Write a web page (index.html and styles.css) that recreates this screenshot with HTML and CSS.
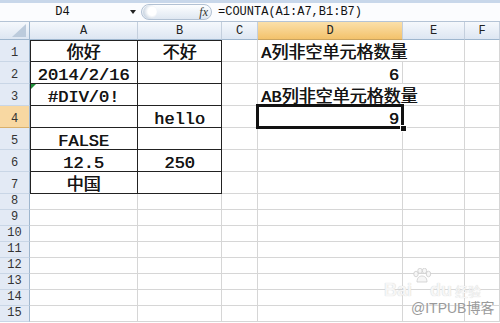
FILE: index.html
```html
<!DOCTYPE html>
<html lang="zh-CN">
<head>
    <meta charset="UTF-8">
    <meta name="viewport" content="width=device-width, initial-scale=1.0">
    <title>COUNTA</title>
    <link rel="stylesheet" href="styles.css">
</head>
<body>
    <div class="formula-bar">
        <div class="name-box">D4</div>
        <div class="name-arrow"></div>
        <div class="fx-pill"><span class="knob"></span><span class="fx">fx</span></div>
        <div class="formula">=COUNTA(A1:A7,B1:B7)</div>
    </div>

    <div class="sheet">
        <div class="row head">
            <div class="corner"></div>
            <div class="ch">A</div>
            <div class="ch">B</div>
            <div class="ch">C</div>
            <div class="ch on">D</div>
            <div class="ch">E</div>
            <div class="ch">F</div>
        </div>
        <div class="row">
            <div class="rh">1</div>
            <div class="c box box-lt">你好</div>
            <div class="c box box-t">不好</div>
            <div class="c"></div>
            <div class="c span2 l">A列非空单元格数量</div>
            <div class="c"></div>
        </div>
        <div class="row">
            <div class="rh">2</div>
            <div class="c box box-l">2014/2/16</div>
            <div class="c box"></div>
            <div class="c"></div>
            <div class="c r">6</div>
            <div class="c"></div>
            <div class="c"></div>
        </div>
        <div class="row">
            <div class="rh">3</div>
            <div class="c box box-l err">#DIV/0!</div>
            <div class="c box"></div>
            <div class="c"></div>
            <div class="c span2 l">AB列非空单元格数量</div>
            <div class="c"></div>
        </div>
        <div class="row">
            <div class="rh on">4</div>
            <div class="c box box-l"></div>
            <div class="c box">hello</div>
            <div class="c"></div>
            <div class="c r sel">9</div>
            <div class="c"></div>
            <div class="c"></div>
        </div>
        <div class="row">
            <div class="rh">5</div>
            <div class="c box box-l">FALSE</div>
            <div class="c box"></div>
            <div class="c"></div>
            <div class="c"></div>
            <div class="c"></div>
            <div class="c"></div>
        </div>
        <div class="row">
            <div class="rh">6</div>
            <div class="c box box-l">12.5</div>
            <div class="c box">250</div>
            <div class="c"></div>
            <div class="c"></div>
            <div class="c"></div>
            <div class="c"></div>
        </div>
        <div class="row">
            <div class="rh">7</div>
            <div class="c box box-l">中国</div>
            <div class="c box"></div>
            <div class="c"></div>
            <div class="c"></div>
            <div class="c"></div>
            <div class="c"></div>
        </div>
        <div class="row short">
            <div class="rh">8</div>
            <div class="c"></div><div class="c"></div><div class="c"></div><div class="c"></div><div class="c"></div><div class="c"></div>
        </div>
        <div class="row short">
            <div class="rh">9</div>
            <div class="c"></div><div class="c"></div><div class="c"></div><div class="c"></div><div class="c"></div><div class="c"></div>
        </div>
        <div class="row short">
            <div class="rh">10</div>
            <div class="c"></div><div class="c"></div><div class="c"></div><div class="c"></div><div class="c"></div><div class="c"></div>
        </div>
        <div class="row short">
            <div class="rh">11</div>
            <div class="c"></div><div class="c"></div><div class="c"></div><div class="c"></div><div class="c"></div><div class="c"></div>
        </div>
        <div class="row short">
            <div class="rh">12</div>
            <div class="c"></div><div class="c"></div><div class="c"></div><div class="c"></div><div class="c"></div><div class="c"></div>
        </div>
        <div class="row short">
            <div class="rh">13</div>
            <div class="c"></div><div class="c"></div><div class="c"></div><div class="c"></div><div class="c"></div><div class="c"></div>
        </div>
        <div class="row short">
            <div class="rh">14</div>
            <div class="c"></div><div class="c"></div><div class="c"></div><div class="c"></div><div class="c"></div><div class="c"></div>
        </div>
        <div class="row short">
            <div class="rh">15</div>
            <div class="c"></div><div class="c"></div><div class="c"></div><div class="c"></div><div class="c"></div><div class="c"></div>
        </div>
    </div>

    <!-- watermark over the grid -->
    <div class="wm-logo">
        <span>Bai</span>
        <svg class="paw" width="20" height="16" viewBox="0 0 20 16">
            <ellipse cx="4" cy="6" rx="2.2" ry="2.8" />
            <ellipse cx="8" cy="2.8" rx="2.2" ry="2.6" />
            <ellipse cx="12.5" cy="2.8" rx="2.2" ry="2.6" />
            <ellipse cx="16.5" cy="6" rx="2.2" ry="2.8" />
            <path d="M5 14 C5 9 8 8 10 8 C12 8 15 9 15 14 Z" />
        </svg>
        <span>du</span>
        <span class="jy">经验</span>
    </div>
    <div class="wm-site">@ITPUB博客</div>
</body>
</html>
```

FILE: styles.css
```css
body {
    margin: 0;
    width: 500px;
    height: 323px;
    overflow: hidden;
    position: relative;
    background: #fff;
    font-family: "Liberation Mono", "Noto Sans CJK SC", monospace;
    color: #111;
}

/* formula bar */
.formula-bar {
    display: flex;
    align-items: center;
    height: 22px;
    box-sizing: border-box;
    border-top: 3px solid #c8d7ea;
    border-bottom: 1px solid #b4c3d5;
    background: #fbfcfe;
}
.name-box {
    width: 125px;
    text-align: center;
    font-size: 12px;
}
.name-arrow {
    width: 16px;
    display: flex;
    justify-content: center;
}
.name-arrow::after {
    content: '';
    border-left: 3px solid transparent;
    border-right: 3px solid transparent;
    border-top: 4px solid #222;
}
.fx-pill {
    width: 71px;
    height: 16px;
    box-sizing: border-box;
    border: 1px solid #b2c1d3;
    border-radius: 8px;
    background: linear-gradient(#fdfeff, #dfe7f1);
    display: flex;
    align-items: center;
    justify-content: space-between;
    padding: 0 3px 0 1px;
}
.knob {
    width: 14px;
    height: 14px;
    border-radius: 50%;
    background: radial-gradient(circle at 65% 45%, #fff 35%, #c3cfdd 80%);
}
.fx {
    font-family: "Liberation Serif", serif;
    font-style: italic;
    font-size: 12px;
    color: #333;
}
.formula {
    margin-left: 6px;
    font-size: 12px;
}

/* sheet grid */
.row {
    display: grid;
    grid-template-columns: 30px 108px 84px 36px 145px 62px 35px;
    height: 22px;
}
.row.head {
    height: 18px;
}
.row.short {
    height: 16px;
}
.corner,
.ch {
    box-sizing: border-box;
    background: linear-gradient(#f5f8fc, #dde6f2);
    border-right: 1px solid #c4cfdd;
    border-bottom: 1px solid #9eb6ce;
    display: flex;
    align-items: center;
    justify-content: center;
    font-size: 12px;
    color: #222;
}
.corner {
    position: relative;
    border-right-color: #9eb6ce;
}
.corner::after {
    content: '';
    position: absolute;
    right: 3px;
    bottom: 2px;
    border-left: 14px solid transparent;
    border-bottom: 13px solid #bccbdc;
}
.ch.on {
    background: linear-gradient(#fbe0aa, #f3c26b);
    border-bottom-color: #c9a35f;
}
.rh {
    box-sizing: border-box;
    background: #e3eaf5;
    border-right: 1px solid #9eb6ce;
    border-bottom: 1px solid #c9d6e6;
    display: flex;
    align-items: flex-end;
    justify-content: center;
    padding-bottom: 1px;
    font-size: 12px;
    color: #333;
}
.rh.on {
    background: #f8d8a2;
    border-bottom-color: #d9b06c;
}
.c {
    box-sizing: border-box;
    border-right: 1px solid #d6d6d6;
    border-bottom: 1px solid #d6d6d6;
    display: flex;
    align-items: flex-end;
    justify-content: center;
    font-size: 17px;
    line-height: 15px;
    white-space: nowrap;
    color: #151515;
    text-shadow: 0.5px 0 0 #151515;
}
.c.l {
    justify-content: flex-start;
    padding-left: 3px;
}
.c.r {
    justify-content: flex-end;
    padding-right: 3px;
}
.span2 {
    grid-column: span 2;
}
.box {
    border-right-color: #222;
    border-bottom-color: #222;
}
.box-l {
    box-shadow: inset 1px 0 #222;
}
.box-t {
    box-shadow: inset 0 1px #222;
}
.box-lt {
    box-shadow: inset 1px 1px #222;
}
.err {
    position: relative;
}
.err::before {
    content: '';
    position: absolute;
    left: 1px;
    top: 0;
    border-top: 5px solid #1f8f3a;
    border-right: 5px solid transparent;
}
.sel {
    position: relative;
}
.sel::after {
    content: '';
    position: absolute;
    left: -2px;
    top: -2px;
    right: -2px;
    bottom: -2px;
    border: 3px solid #111;
}
.sel::before {
    content: '';
    position: absolute;
    right: -5px;
    bottom: -5px;
    width: 5px;
    height: 5px;
    background: #111;
    border: 1px solid #fff;
    z-index: 1;
}

/* watermark */
.wm-logo {
    position: absolute;
    left: 384px;
    top: 268px;
    display: flex;
    align-items: flex-end;
    font-family: "Liberation Sans", sans-serif;
    font-weight: bold;
    font-size: 18px;
    line-height: 16px;
    color: #f6f6f6;
    text-shadow: 0 0 1px #c8c8c8;
}
.wm-logo .jy {
    font-family: "Noto Sans CJK SC", sans-serif;
    font-size: 13px;
    line-height: 14px;
    font-weight: normal;
    margin-left: 3px;
}
.paw {
    fill: #f6f6f6;
    stroke: #cdcdcd;
    stroke-width: 0.8;
    margin: 0 -2px 14px 0;
}
.wm-site {
    position: absolute;
    left: 411px;
    top: 301px;
    font-family: "Liberation Sans", "Noto Sans CJK SC", sans-serif;
    font-size: 14px;
    line-height: 15px;
    color: #9a9a9a;
    text-shadow: 0 0 2px #fff;
}
```
